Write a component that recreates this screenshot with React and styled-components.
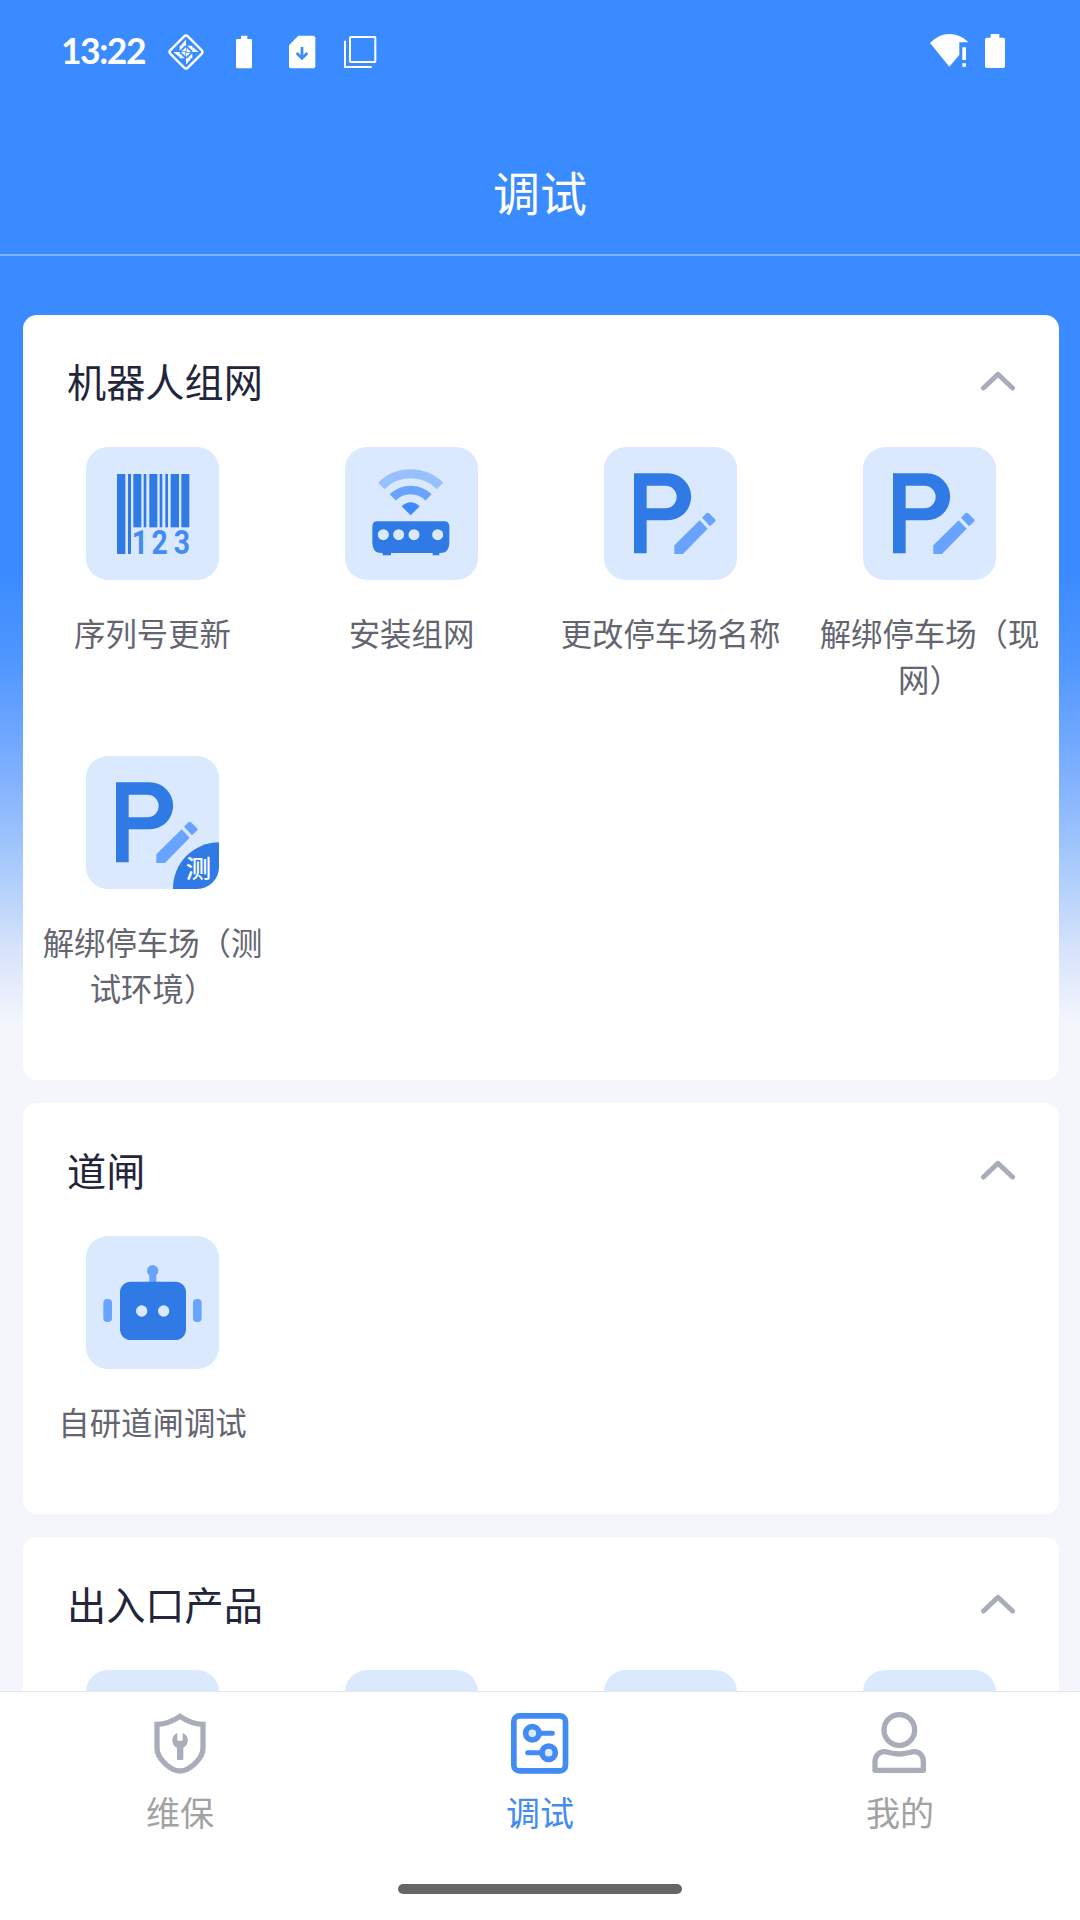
import React from 'react';
import styled, { createGlobalStyle } from 'styled-components';

const GlobalStyle = createGlobalStyle`
  * { box-sizing: border-box; }
  html, body { margin: 0; padding: 0; }
  body {
    font-family: "Noto Sans CJK SC", "Noto Sans", sans-serif;
    overflow: hidden;
  }
  svg { display: block; flex: none; }
`;

const Screen = styled.div`
  width: 1080px;
  height: 1920px;
  display: flex;
  flex-direction: column;
  overflow: hidden;
  background: linear-gradient(
    180deg,
    #3a8bff 0, #3a8bff 570px, #4f96ff 660px, #7fb0fe 774px,
    #b0cffc 881px, #d8e4fb 953px, #f4f6fc 1025px
  );
`;

const StatusBar = styled.div`
  height: 104px;
  flex: none;
  display: flex;
  align-items: center;
  justify-content: space-between;
  padding: 0 66px 0 61px;
`;

const StatusGroup = styled.div`
  display: flex;
  align-items: center;
  gap: ${(p) => p.$gap}px;
`;

const Clock = styled.div`
  width: 86px;
  font-family: Lato, sans-serif;
  font-weight: 700;
  font-size: 35.5px;
  line-height: 38px;
  padding-bottom: 2px;
  letter-spacing: -1.5px;
  color: #fff;
  white-space: nowrap;
`;

const Header = styled.header`
  height: 152px;
  flex: none;
  display: flex;
  align-items: center;
  justify-content: center;
  border-bottom: 2px solid #7db3fd;
`;

const PageTitle = styled.h1`
  margin: 0;
  padding-top: 24px;
  font-size: 47px;
  line-height: 60px;
  font-weight: 400;
  color: #fff;
`;

const Content = styled.main`
  flex: 1;
  min-height: 0;
  overflow: hidden;
  display: flex;
  flex-direction: column;
  gap: 23px;
  padding: 59px 21px 0 23px;
`;

const Card = styled.section`
  flex: none;
  background: #fff;
  border-radius: 14px;
  padding-bottom: 15px;
`;

const CardHeader = styled.div`
  height: ${(p) => p.$height}px;
  display: flex;
  align-items: center;
  justify-content: space-between;
  padding: 0 44px;
`;

const CardTitle = styled.h2`
  margin: 0;
  padding-bottom: 2px;
  font-size: 39.2px;
  line-height: 56px;
  font-weight: 400;
  color: #23253a;
`;

const Grid = styled.div`
  display: grid;
  grid-template-columns: repeat(4, 1fr);
`;

const Cell = styled.div`
  display: flex;
  flex-direction: column;
  align-items: center;
  padding: 0 18px 54px;
`;

const Tile = styled.div`
  width: 133px;
  height: 133px;
  border-radius: 22px;
  background: #dbe9ff;
  overflow: hidden;
`;

const Label = styled.div`
  margin-top: 30px;
  min-height: 46px;
  font-size: 31.4px;
  line-height: 46px;
  color: #64656f;
  text-align: center;
`;

const TabBar = styled.nav`
  flex: none;
  height: 229px;
  background: #fff;
  border-top: 1px solid #e4e6ec;
  display: flex;
  flex-direction: column;
  align-items: center;
`;

const Tabs = styled.div`
  width: 100%;
  height: 192px;
  display: grid;
  grid-template-columns: repeat(3, 1fr);
`;

const Tab = styled.div`
  display: flex;
  flex-direction: column;
  align-items: center;
  gap: 11px;
  padding-top: 18px;
  font-size: 34px;
  line-height: 50px;
  color: ${(p) => (p.$active ? '#428bf0' : '#a2a2a4')};
`;

const HomeIndicator = styled.div`
  width: 284px;
  height: 10px;
  border-radius: 5px;
  background: #666;
`;

const StatusIcon = ({ children }) => (
  <svg width="38" height="38" viewBox="0 0 114 114" fill="#fff">{children}</svg>
);

const DiamondIcon = () => (
  <StatusIcon>
    <rect x="20" y="20" width="74" height="74" rx="8" transform="rotate(45 57 57)" fill="none" stroke="#fff" strokeWidth="7" />
    {[0, 90, 180, 270].map((a) => (
      <g key={a} transform={`rotate(${a} 57 57)`}>
        <path d="M57 19V38H41Z" />
        <path d="M57 42V55L44 55Z" />
        <path d="M61 38H76V53Z" />
      </g>
    ))}
  </StatusIcon>
);

const SmallBatteryIcon = () => (
  <StatusIcon>
    <path d="M48 8H67V18H77Q81 18 81 22V102Q81 106 77 106H37Q33 106 33 102V22Q33 18 37 18H48Z" />
  </StatusIcon>
);

const SimIcon = () => (
  <StatusIcon>
    <path d="M46 8H89Q97 8 97 16V98Q97 106 89 106H26Q18 106 18 98V37Z" />
    <path d="M57 42V74M41 60L57 76L73 60" fill="none" stroke="#3a8bff" strokeWidth="8" />
  </StatusIcon>
);

const LayersIcon = () => (
  <StatusIcon>
    <rect x="27" y="12" width="76" height="75" rx="2" fill="none" stroke="#fff" strokeWidth="6" />
    <path d="M12 23V102H92" fill="none" stroke="#fff" strokeWidth="6" />
  </StatusIcon>
);

const WifiAlertIcon = () => (
  <StatusIcon>
    <path d="M0 30Q26 3 58 3Q90 3 114 26V28H88V66L58 101Z" />
    <path d="M97 43H108V81H97ZM97 91H108V101H97Z" />
  </StatusIcon>
);

const BatteryIcon = () => (
  <StatusIcon>
    <path d="M44 3H70V14H82Q87 14 87 19V100Q87 105 82 105H32Q27 105 27 100V19Q27 14 32 14H44Z" />
  </StatusIcon>
);

const Chevron = () => (
  <svg width="34" height="20" viewBox="0 0 34 20" fill="none" stroke="#a9adba" strokeWidth="5" strokeLinecap="round" strokeLinejoin="round">
    <path d="M2.500 17L17 3.300L31.500 17" />
  </svg>
);

const TileSvg = ({ children }) => (
  <svg width="133" height="133" viewBox="0 0 399 399" fill="#2f7ae5">{children}</svg>
);

const bars = [
  [93, 25, 240], [126, 9, 240], [142, 24, 160], [173, 8, 160], [190, 24, 160],
  [221, 8, 160], [238, 8, 160], [254, 25, 160], [286, 24, 160],
];

const BarcodeIcon = () => (
  <TileSvg>
    {bars.map(([x, w, h]) => <rect key={x} x={x} y="81" width={w} height={h} />)}
    <g fill="#428bf5" fontFamily="Roboto, sans-serif" fontWeight="700" fontSize="99" textAnchor="middle">
      <text transform="translate(162 321) scale(.86 1)">1</text>
      <text transform="translate(221 321) scale(.86 1)">2</text>
      <text transform="translate(288 321) scale(.86 1)">3</text>
    </g>
  </TileSvg>
);

const RouterIcon = () => (
  <TileSvg>
    <path d="M109 117A124.500 124.500 0 0 1 285 117" fill="none" stroke="#98c0ff" strokeWidth="27" />
    <path d="M143.300 151.300A76 76 0 0 1 250.700 151.300" fill="none" stroke="#68a4ff" strokeWidth="26" />
    <path d="M170 178Q197 154 224 178L197 205Z" fill="#3e89fb" />
    <path d="M98 223H297Q313 223 313 239V287Q313 318 285 318H283V325H263V318H138V325H113V318H110Q82 318 82 287V239Q82 223 98 223Z" />
    <g fill="#dbe9ff">
      <circle cx="115" cy="263" r="16.500" />
      <circle cx="161" cy="263" r="16.500" />
      <circle cx="207" cy="263" r="16.500" />
      <circle cx="278" cy="263" r="16.500" />
    </g>
  </TileSvg>
);

const ParkingShape = () => (
  <>
    <path fillRule="evenodd" d="M90 79H191A70.500 70.500 0 0 1 191 220H128V319H90ZM128 116V184H184A34 34 0 0 0 184 116Z" />
    <path fill="#68a4ff" d="M211 295L287 220L311 245L237 321H211Z" />
    <path fill="#68a4ff" d="M294 212L307 199Q311 195 315 199L333 216Q337 220 333 224L318 238Z" />
  </>
);

const ParkingIcon = () => <TileSvg><ParkingShape /></TileSvg>;

const ParkingTestIcon = () => (
  <TileSvg>
    <ParkingShape />
    <path d="M399 259A138 138 0 0 0 261 399H399Z" />
    <text x="337" y="365" textAnchor="middle" fontSize="76" fontWeight="500" fill="#fff" fontFamily="Noto Sans CJK SC, sans-serif">测</text>
  </TileSvg>
);

const RobotIcon = () => (
  <TileSvg>
    <g fill="#68a4ff">
      <circle cx="200" cy="104" r="17" />
      <rect x="190" y="104" width="21" height="36" />
      <rect x="52" y="189" width="26" height="69" rx="12" />
      <rect x="321" y="189" width="26" height="69" rx="12" />
    </g>
    <rect x="102" y="137" width="198" height="175" rx="32" />
    <circle cx="167" cy="225" r="17" fill="#dbe9ff" />
    <circle cx="233" cy="225" r="17" fill="#dbe9ff" />
  </TileSvg>
);

const ShieldIcon = () => (
  <svg width="66" height="66" viewBox="0 0 198 198" fill="#a9adba">
    <path d="M99 19C80 32 55 42 30 43V115C30 145 70 183 99 183C128 183 168 145 168 115V43C143 42 118 32 99 19Z" fill="none" stroke="#a9adba" strokeWidth="16" />
    <path d="M91 69A24 24 0 0 0 90 113V147Q90 150 93 150H106Q109 150 109 147V113A24 24 0 0 0 107 69V92H91Z" />
  </svg>
);

const DebugIcon = () => (
  <svg width="66" height="66" viewBox="0 0 198 198" fill="#d9eaff" stroke="#428bf5" strokeWidth="17" strokeLinecap="round">
    <rect x="20.500" y="17.500" width="155" height="165" rx="17" fill="none" />
    <path d="M100 70H136M62 128H98" strokeWidth="15" />
    <circle cx="76" cy="70" r="20" />
    <circle cx="125" cy="128" r="20" />
  </svg>
);

const UserIcon = () => (
  <svg width="66" height="66" viewBox="0 0 198 198" fill="none" stroke="#a9adba" strokeWidth="16" strokeLinejoin="round">
    <circle cx="97" cy="60" r="46" />
    <path d="M24 181V155C24 138 36 125 52 125C62 125 75 132 97 132C119 132 131 125 142 125C158 125 169 138 169 155V181Z" />
  </svg>
);

const sections = [
  {
    title: '机器人组网',
    headerHeight: 132,
    items: [
      { label: '序列号更新', icon: <BarcodeIcon /> },
      { label: '安装组网', icon: <RouterIcon /> },
      { label: '更改停车场名称', icon: <ParkingIcon /> },
      { label: '解绑停车场（现网）', icon: <ParkingIcon /> },
      { label: '解绑停车场（测试环境）', icon: <ParkingTestIcon /> },
    ],
  },
  {
    title: '道闸',
    headerHeight: 133,
    items: [{ label: '自研道闸调试', icon: <RobotIcon /> }],
  },
  { title: '出入口产品', headerHeight: 133, items: [{}, {}, {}, {}] },
];

const tabs = [
  { label: '维保', icon: <ShieldIcon /> },
  { label: '调试', icon: <DebugIcon />, active: true },
  { label: '我的', icon: <UserIcon /> },
];

export default function App() {
  return (
    <>
      <GlobalStyle />
      <Screen>
        <StatusBar>
          <StatusGroup $gap={20}>
            <Clock>13:22</Clock>
            <DiamondIcon />
            <SmallBatteryIcon />
            <SimIcon />
            <LayersIcon />
          </StatusGroup>
          <StatusGroup $gap={8}>
            <WifiAlertIcon />
            <BatteryIcon />
          </StatusGroup>
        </StatusBar>
        <Header>
          <PageTitle>调试</PageTitle>
        </Header>
        <Content>
          {sections.map((section) => (
            <Card key={section.title}>
              <CardHeader $height={section.headerHeight}>
                <CardTitle>{section.title}</CardTitle>
                <Chevron />
              </CardHeader>
              <Grid>
                {section.items.map((item, i) => (
                  <Cell key={i}>
                    <Tile>{item.icon}</Tile>
                    {item.label && <Label>{item.label}</Label>}
                  </Cell>
                ))}
              </Grid>
            </Card>
          ))}
        </Content>
        <TabBar>
          <Tabs>
            {tabs.map((tab) => (
              <Tab key={tab.label} $active={tab.active}>
                {tab.icon}
                <span>{tab.label}</span>
              </Tab>
            ))}
          </Tabs>
          <HomeIndicator />
        </TabBar>
      </Screen>
    </>
  );
}
